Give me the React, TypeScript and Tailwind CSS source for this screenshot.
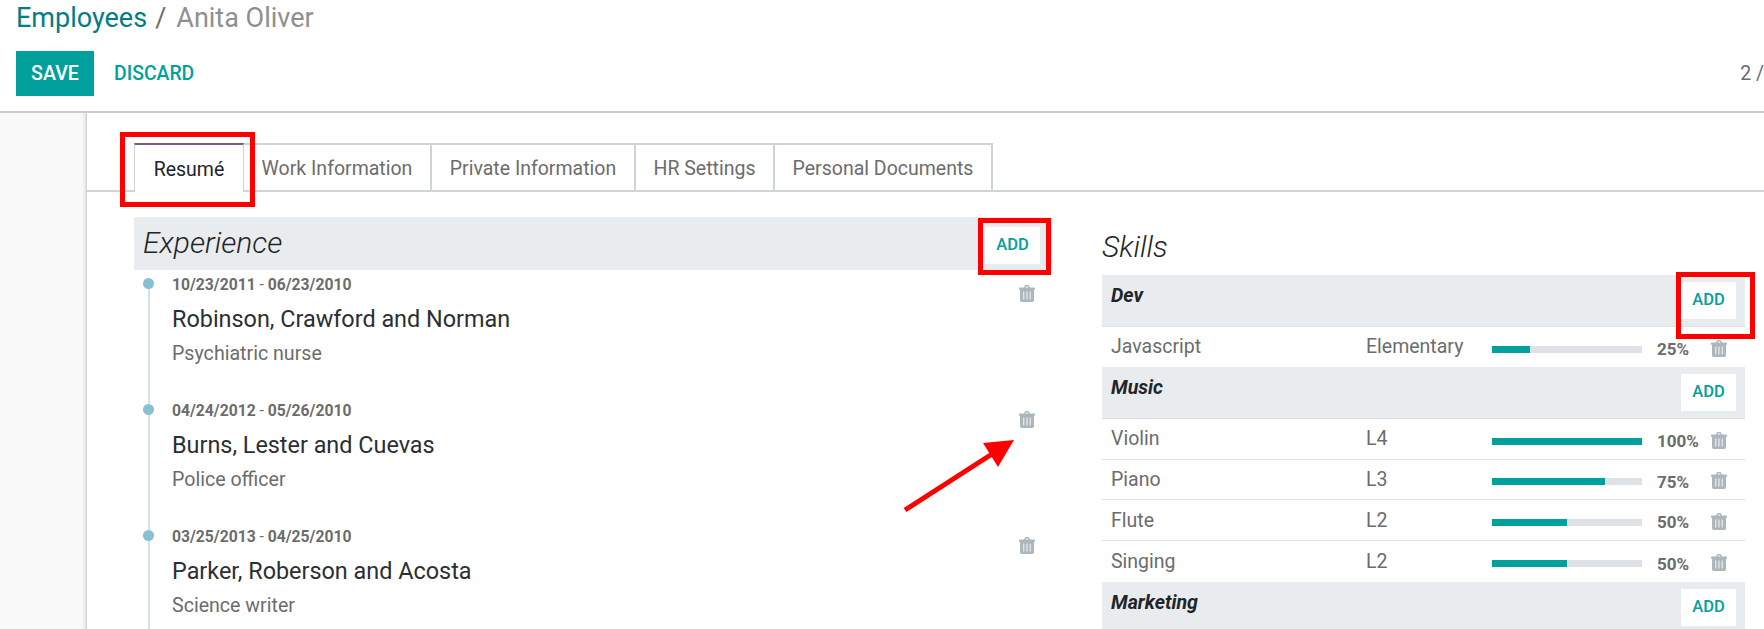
import React from "react"

function TrashIcon() {
  return (
    <svg width="16" height="17" viewBox="0 0 16 17" className="shrink-0 text-[#adb5bd]">
      <path
        fill="currentColor"
        d="M5 2.6 6 .6C6.2.2 6.5 0 7 0h2c.5 0 .8.2 1 .6l1 2h4.4c.3 0 .6.3.6.6v1c0 .3-.3.6-.6.6H15v10.2c0 1.1-.8 2-1.8 2H2.8c-1 0-1.8-.9-1.8-2V4.8H.6C.3 4.8 0 4.500 0 4.200v-1c0-.3.3-.6.6-.6H5zM6.500 2.600h3L9 1.400H7l-.5 1.200z"
      />
      <path fill="#fff" opacity="0.65" d="M4 6.500h1.400v8H4zM7.300 6.500h1.400v8H7.300zM10.600 6.500H12v8h-1.400z" />
    </svg>
  )
}

function AddButton() {
  return (
    <button className="w-[55px] h-[37px] bg-white text-[#00a09d] text-[16.500px] font-medium flex items-center justify-center">
      ADD
    </button>
  )
}

const experiences = [
  { from: "10/23/2011", to: "06/23/2010", company: "Robinson, Crawford and Norman", job: "Psychiatric nurse" },
  { from: "04/24/2012", to: "05/26/2010", company: "Burns, Lester and Cuevas", job: "Police officer" },
  { from: "03/25/2013", to: "04/25/2010", company: "Parker, Roberson and Acosta", job: "Science writer" },
]

function ExperienceItem({ from, to, company, job }: { from: string; to: string; company: string; job: string }) {
  return (
    <div className="flex h-[126px] pl-[9px] pr-[17px]">
      <div className="w-[11px] flex flex-col items-center shrink-0">
        <div className="w-[11px] h-[11px] rounded-full bg-[#87c0d1] shrink-0" />
        <div className="w-[2px] flex-1 bg-[#d5e0e8]" />
      </div>
      <div className="ml-[18px] flex-1">
        <div className="h-[14px] leading-[14px] text-[15.700px] text-[#6c6c6c]">
          <span className="font-bold">{from}</span> - <span className="font-bold">{to}</span>
        </div>
        <div className="mt-[12px] leading-[30px] text-[23.400px] text-[#2b2f33]">{company}</div>
        <div className="mt-[8px] leading-[24px] text-[19.600px] text-[#6c6c6c]">{job}</div>
      </div>
      <div className="pt-[7px]">
        <TrashIcon />
      </div>
    </div>
  )
}

function SkillGroup({ name }: { name: string }) {
  return (
    <div className="h-[51.500px] bg-[#e9ecef] border-b border-[#dee2e6] flex justify-between pl-[9px] pr-[9px] pt-[7px] shrink-0">
      <div className="font-bold italic text-[19.600px] leading-[28px] text-[#212529]">{name}</div>
      <AddButton />
    </div>
  )
}

function SkillRow({ name, level, pct, last }: { name: string; level: string; pct: number; last?: boolean }) {
  return (
    <div className={`h-[40.750px] flex items-center pl-[9px] text-[19.500px] text-[#6c6c6c] shrink-0 ${last ? "" : "border-b border-[#dee2e6]"}`}>
      <div className="w-[255px]">{name}</div>
      <div className="w-[126px]">{level}</div>
      <div className="w-[150px] h-[7px] mt-[5px] bg-[#dee2e6]">
        <div className="h-full bg-[#00a09d]" style={{ width: `${pct}%` }} />
      </div>
      <div className="w-[54px] ml-[15px] text-[17px] font-bold pt-[6px]">{pct}%</div>
      <div className="pt-[3px]">
        <TrashIcon />
      </div>
    </div>
  )
}

export default function App() {
  return (
    <div className="relative w-[1764px] h-[629px] overflow-hidden bg-white font-[Roboto,sans-serif]">
      <header className="h-[113px] border-b-2 border-[#cccccc] pl-[16px]">
        <div className="h-[36px] leading-[36px] text-[27px] flex">
          <span className="text-[#017e84]">Employees</span>
          <span className="text-[#6c6c6c] ml-[8px] mr-[10px]">/</span>
          <span className="text-[#8f8f8f]">Anita Oliver</span>
        </div>
        <div className="mt-[15px] flex items-center justify-between">
          <div className="flex items-center">
            <button className="w-[78px] h-[45px] bg-[#00a09d] text-white text-[19.600px] font-medium">SAVE</button>
            <button className="ml-[20px] text-[#00a09d] text-[19.400px] font-medium">DISCARD</button>
          </div>
          <div className="text-[19.500px] text-[#6c6c6c]">2 /</div>
        </div>
      </header>

      <div className="flex h-[516px]">
        <div className="w-[86px] bg-[#f9f9f9] border-r border-[#e2e2e2] shadow-[inset_-4px_0_4px_-3px_rgba(0,0,0,0.08)] shrink-0" />
        <main className="flex-1 border-l border-[#d0d4d9]">
          <div className="mt-[30px] h-[49px] border-b-2 border-[#ced4da] pl-[47px] flex">
            <div className="h-[49px] w-[110px] pt-[2px] bg-white border-t-2 border-t-[#7c5b7c] border-x border-x-[#ced4da] flex items-center justify-center text-[19.500px] text-[#212529]">
              Resumé
            </div>
            {[
              ["Work Information", "w-[188px]"],
              ["Private Information", "w-[204px]"],
              ["HR Settings", "w-[139px]"],
              ["Personal Documents", "w-[218px]"],
            ].map(([label, width]) => (
              <div
                key={label}
                className={`${width} h-[47px] pt-[2px] border-t-2 border-r-2 border-[#ced4da] flex items-center justify-center text-[19.500px] text-[#6c6c6c]`}
              >
                {label}
              </div>
            ))}
          </div>

          <div className="flex pl-[47px] pr-[19px] mt-[25px]">
            <section className="w-[918px] shrink-0">
              <div className="h-[53px] bg-[#e9ecef] flex items-start justify-between pl-[9px] pr-[12px] pt-[10px]">
                <h2 className="italic font-light text-[30px] leading-[34px] -mt-[1px] text-[#212529]">Experience</h2>
                <AddButton />
              </div>
              <div className="mt-[8px]">
                {experiences.map((exp) => (
                  <ExperienceItem key={exp.company} {...exp} />
                ))}
              </div>
            </section>

            <section className="ml-[50px] flex-1 flex flex-col">
              <h2 className="italic font-light text-[30px] text-[#212529] h-[58px] leading-[60px]">Skills</h2>
              <SkillGroup name="Dev" />
              <SkillRow name="Javascript" level="Elementary" pct={25} last />
              <SkillGroup name="Music" />
              <SkillRow name="Violin" level="L4" pct={100} />
              <SkillRow name="Piano" level="L3" pct={75} />
              <SkillRow name="Flute" level="L2" pct={50} />
              <SkillRow name="Singing" level="L2" pct={50} last />
              <SkillGroup name="Marketing" />
            </section>
          </div>
        </main>
      </div>

      {/* red annotations drawn over the screenshot */}
      <div className="absolute left-[120px] top-[132px] w-[135px] h-[75px] border-[5px] border-[#ff0000]" />
      <div className="absolute left-[978px] top-[218px] w-[73px] h-[57px] border-[5px] border-[#ff0000]" />
      <div className="absolute left-[1676px] top-[272px] w-[79px] h-[67px] border-[5px] border-[#ff0000]" />
      <svg className="absolute left-[900px] top-[435px]" width="120" height="80" viewBox="900 435 120 80">
        <line x1="905" y1="510" x2="992" y2="454" stroke="#ff0000" strokeWidth="5" />
        <polygon points="1014,440 983,443 998,467" fill="#ff0000" />
      </svg>
    </div>
  )
}
